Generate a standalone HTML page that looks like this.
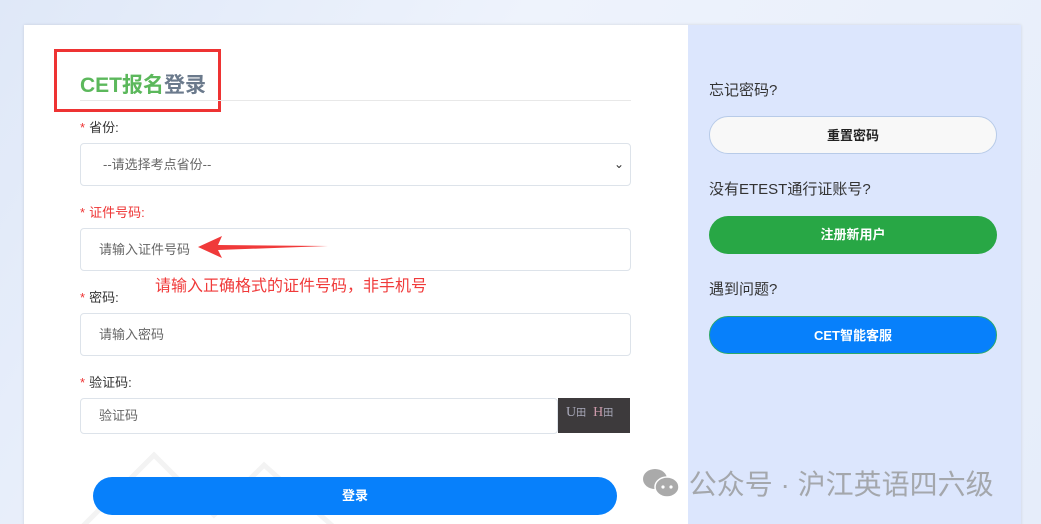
<!DOCTYPE html>
<html><head><meta charset="utf-8"><style>
*{margin:0;padding:0;box-sizing:border-box}
html,body{width:1041px;height:524px;overflow:hidden}
body{background:linear-gradient(120deg,#dfe8f8,#eef3fc 40%,#e6edfa);font-family:"Liberation Sans","Noto Sans CJK SC",sans-serif;position:relative}
.card{position:absolute;left:24px;top:25px;width:997px;height:520px;background:#fff;box-shadow:0 0 3px rgba(0,0,0,.12)}
.right{position:absolute;left:664px;top:0;width:333px;height:100%;background:#dce6fd}
.abs{position:absolute}
.title{left:56px;top:44px;font-size:21px;font-weight:bold;color:#5cb85c}
.title span{color:#6b7a8c}
.redbox{left:30px;top:24px;width:167px;height:63px;border:3px solid #ee3333}
.hr{left:56px;top:75px;width:551px;height:1px;background:#e8e8e8}
.lbl{font-size:13px;color:#333}
.lbl i{color:#e33;font-style:normal;margin-right:4px}
.inp{left:56px;width:551px;height:43px;border:1px solid #dde3ea;border-radius:4px;font-size:13px;color:#666;padding-left:18px;line-height:41px}
.btn{border-radius:19px;height:38px;text-align:center;line-height:37px;font-size:13px;font-weight:bold}
.rt{font-size:15px;color:#333}
</style></head><body>
<div class="card">
<svg class="abs" style="left:40px;top:410px" width="300" height="110"><path d="M0 110 L90 20 L150 80 L200 30 L290 110" fill="none" stroke="#f3f3f3" stroke-width="5"/></svg>
<div class="abs redbox"></div>
<div class="abs title">CET报名<span>登录</span></div>
<div class="abs hr"></div>
<div class="abs lbl" style="left:56px;top:92px"><i>*</i>省份:</div>
<div class="abs inp" style="top:118px;padding-left:22px">--请选择考点省份--<span style="position:absolute;right:6px;top:0;color:#333;font-size:12px">&#8964;</span></div>
<div class="abs lbl" style="left:56px;top:177px;color:#e33"><i>*</i>证件号码:</div>
<div class="abs inp" style="top:203px">请输入证件号码</div>
<svg class="abs" style="left:170px;top:208px" width="140" height="30"><path d="M4 14 L28 3 L24 12 L134 13 L24 17 L28 25 Z" fill="#f03a3a"/></svg>
<div class="abs" style="left:131px;top:247px;font-size:16px;color:#f03a3a">请输入正确格式的证件号码，非手机号</div>
<div class="abs lbl" style="left:56px;top:262px"><i>*</i>密码:</div>
<div class="abs inp" style="top:288px">请输入密码</div>
<div class="abs lbl" style="left:56px;top:347px"><i>*</i>验证码:</div>
<div class="abs inp" style="top:373px;width:478px;height:36px;line-height:34px">验证码</div>
<div class="abs" style="left:534px;top:373px;width:72px;height:35px;background:#3d3a3c;color:#aab;font-size:14px;padding:6px 0 0 8px;font-family:'Liberation Serif',serif">U<span style="font-size:10px">田</span> &nbsp;<span style="color:#c9a">H</span><span style="font-size:10px">田</span></div>
<div class="abs btn" style="left:69px;top:452px;width:524px;background:#0780fb;color:#fff">登录</div>
<div class="right">
<div class="abs rt" style="left:21px;top:54px">忘记密码?</div>
<div class="abs btn" style="left:21px;top:91px;width:288px;background:#f8f8f8;border:1px solid #b8cbe8;color:#222">重置密码</div>
<div class="abs rt" style="left:21px;top:153px">没有ETEST通行证账号?</div>
<div class="abs btn" style="left:21px;top:191px;width:288px;background:#28a745;color:#fff">注册新用户</div>
<div class="abs rt" style="left:21px;top:253px">遇到问题?</div>
<div class="abs btn" style="left:21px;top:291px;width:288px;background:#0780fb;color:#fff;border:1px solid #2ea86a">CET智能客服</div>
</div>
<div class="abs" style="left:617px;top:438px;font-size:28px;color:#a4a7ac;white-space:nowrap">
<svg width="40" height="34" style="vertical-align:-6px"><ellipse cx="14" cy="13" rx="12" ry="10" fill="#aaa"/><ellipse cx="26" cy="21" rx="12" ry="10" fill="#aaa" stroke="#fff" stroke-width="1.5"/><circle cx="22" cy="21" r="1.6" fill="#fff"/><circle cx="30" cy="21" r="1.6" fill="#fff"/></svg> 公众号 · 沪江英语四六级</div>
</div>
</body></html>
